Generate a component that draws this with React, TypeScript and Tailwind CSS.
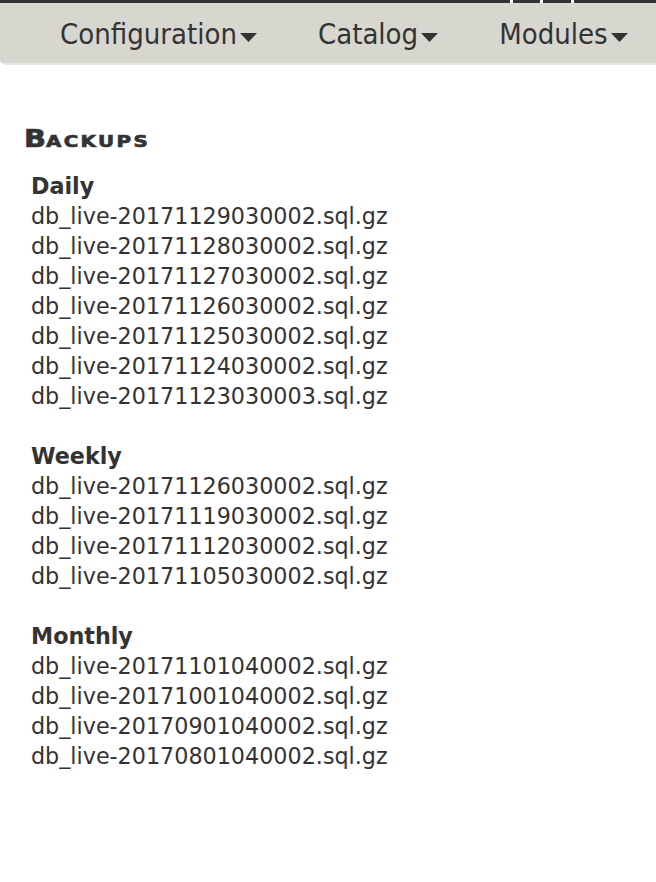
import React from "react";

const DAILY = [
  "db_live-20171129030002.sql.gz",
  "db_live-20171128030002.sql.gz",
  "db_live-20171127030002.sql.gz",
  "db_live-20171126030002.sql.gz",
  "db_live-20171125030002.sql.gz",
  "db_live-20171124030002.sql.gz",
  "db_live-20171123030003.sql.gz",
];

const WEEKLY = [
  "db_live-20171126030002.sql.gz",
  "db_live-20171119030002.sql.gz",
  "db_live-20171112030002.sql.gz",
  "db_live-20171105030002.sql.gz",
];

const MONTHLY = [
  "db_live-20171101040002.sql.gz",
  "db_live-20171001040002.sql.gz",
  "db_live-20170901040002.sql.gz",
  "db_live-20170801040002.sql.gz",
];

function Caret() {
  return (
    <svg width="17" height="9" viewBox="0 0 17 9" className="ml-[3px] mt-1">
      <path d="M0 0 L17 0 L8.5 9 Z" fill="#333" />
    </svg>
  );
}

function NavItem({ label }: { label: string }) {
  return (
    <div className="flex items-center">
      <span>{label}</span>
      <Caret />
    </div>
  );
}

function Group({ title, files }: { title: string; files: string[] }) {
  return (
    <div className="mb-[30px]">
      <div className="font-bold leading-[30px]">{title}</div>
      {files.map((f, i) => (
        <div key={i} className="leading-[30px]">
          {f}
        </div>
      ))}
    </div>
  );
}

export default function App() {
  return (
    <div className="min-h-[882px] w-[656px] bg-white text-[#333]">
      <div className="flex h-[3px] w-full">
        <div className="w-[510px] bg-[#333]" />
        <div className="w-[3px] bg-white" />
        <div className="w-[27px] bg-[#333]" />
        <div className="w-[3px] bg-white" />
        <div className="w-[28px] bg-[#333]" />
        <div className="w-[3px] bg-white" />
        <div className="flex-1 bg-[#333]" />
      </div>
      <div
        className="flex h-[62px] items-center gap-[61px] rounded-bl-[5px] border-b-2 border-[#e6e6e2] bg-[#d7d7cf] pl-[60px] pt-[4px] text-[29px] text-[#333]"
        style={{ fontFamily: '"DejaVu Sans Condensed", "DejaVu Sans", sans-serif', fontStretch: "condensed" }}
      >
        <NavItem label="Configuration" />
        <NavItem label="Catalog" />
        <NavItem label="Modules" />
      </div>

      <div
        className="pl-[24px] pt-[58px]"
        style={{ fontFamily: '"DejaVu Sans", Verdana, sans-serif' }}
      >
        <h1 className="inline-block origin-left scale-x-[1.2] font-bold leading-[32px] [-webkit-text-stroke:0.7px_#333]">
          <span className="text-[24px]">B</span>
          <span className="text-[16.5px] tracking-[2px]">ACKUPS</span>
        </h1>
        <div className="pl-[7px] pt-[13px] text-[22.25px]">
          <Group title="Daily" files={DAILY} />
          <Group title="Weekly" files={WEEKLY} />
          <Group title="Monthly" files={MONTHLY} />
        </div>
      </div>
    </div>
  );
}
